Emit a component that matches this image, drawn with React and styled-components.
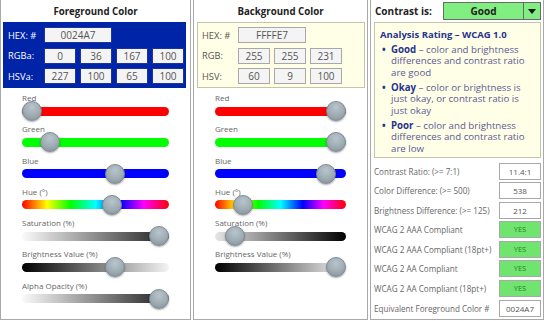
import { Fragment } from "react";
import styled, { createGlobalStyle } from "styled-components";

const GlobalStyle = createGlobalStyle`
  body {
    margin: 0;
    background: #fff;
    font-family: "Open Sans", "Noto Sans", sans-serif;
  }
`;

const Page = styled.div`
  display: flex;
  gap: 2px;
  width: 544px;
  height: 320px;
  overflow: hidden;
`;

const Panel = styled.div`
  flex: none;
  width: ${(p) => p.$w}px;
  box-sizing: border-box;
  border: 1px solid #a9a9a9;
  border-top: none;
  display: flex;
  flex-direction: column;
  overflow: hidden;
`;

const Title = styled.div`
  height: 22px;
  line-height: 23px;
  text-align: center;
  font-size: 9.7px;
  font-weight: 700;
  color: #222;
`;

const ColorBox = styled.div`
  margin: 0 ${(p) => p.$mr}px 0 ${(p) => p.$ml}px;
  box-sizing: border-box;
  height: 66px;
  padding: 4px 4px 0;
  background: ${(p) => p.$bg};
  border: 1px solid ${(p) => p.$border};
  display: grid;
  grid-template-columns: 32px repeat(4, 32px);
  grid-auto-rows: 16px;
  column-gap: 4px;
  row-gap: 4.5px;
  align-items: center;
`;

const BoxLabel = styled.span`
  font-size: 9.3px;
  color: ${(p) => (p.$light ? "#fff" : "#555")};
  white-space: nowrap;
`;

const Field = styled.input`
  box-sizing: border-box;
  width: 100%;
  height: 16px;
  padding: 0;
  border: 1px solid ${(p) => (p.$dark ? "#1d3596" : "#a8a8a8")};
  background: #f4f4f4;
  color: #555;
  font-family: inherit;
  font-size: 10px;
  text-align: center;
  grid-column: span ${(p) => p.$span || 1};
`;

const SliderList = styled.div`
  padding: 4px 21px 0;
  display: flex;
  flex-direction: column;
`;

const SliderBlock = styled.div`
  height: 31.3px;
`;

const SliderLabel = styled.div`
  height: 12px;
  line-height: 12px;
  font-size: 8px;
  color: #666;
`;

const TrackWrap = styled.div`
  height: 14px;
  display: flex;
  align-items: center;
`;

const Track = styled.div`
  position: relative;
  flex: 1;
  height: 9px;
  border-radius: 5px;
  background: ${(p) => p.$bg};
`;

const Thumb = styled.div`
  position: absolute;
  top: 50%;
  width: 20px;
  height: 20px;
  margin-top: -10px;
  box-sizing: border-box;
  border-radius: 50%;
  border: 1px solid #7d8a92;
  background: radial-gradient(circle at 50% 30%, #b9c5cc 0%, #9eabb3 55%, #7f8d95 100%);
  box-shadow: 0 1px 2px rgba(0, 0, 0, 0.35);
`;

const Header = styled.div`
  height: 22px;
  display: flex;
  align-items: center;
  justify-content: space-between;
  padding: 0 2px 0 4px;
`;

const HeaderLabel = styled.span`
  font-size: 10px;
  font-weight: 700;
  color: #222;
`;

const Select = styled.div`
  width: 98px;
  height: 18px;
  box-sizing: border-box;
  border: 1px solid #6a6a6a;
  background: #80ee80;
  display: flex;
`;

const SelectValue = styled.div`
  flex: 1;
  text-align: center;
  line-height: 16px;
  font-size: 10px;
  font-weight: 700;
  color: #222;
`;

const SelectArrow = styled.div`
  width: 16px;
  border-left: 1px solid #6a6a6a;
  display: flex;
  align-items: center;
  justify-content: center;
  &::after {
    content: "";
    border-left: 4px solid transparent;
    border-right: 4px solid transparent;
    border-top: 5px solid #111;
  }
`;

const InfoBox = styled.div`
  margin: 0 2px 0 3px;
  height: 136px;
  box-sizing: border-box;
  padding: 5px 2px 0 5px;
  background: #ffffe7;
  border: 1px solid #c4c4a8;
`;

const InfoTitle = styled.div`
  font-size: 9.5px;
  font-weight: 700;
  color: #26338f;
  line-height: 13px;
  white-space: nowrap;
`;

const InfoList = styled.ul`
  list-style: none;
  margin: 2.5px 0 0;
  padding: 0 0 0 2px;
  display: flex;
  flex-direction: column;
  gap: 3.5px;
`;

const InfoItem = styled.li`
  display: flex;
  font-size: 9.7px;
  line-height: 11.5px;
  color: #5a5a96;
  white-space: nowrap;
  &::before {
    content: "•";
    width: 9px;
    flex: none;
    color: #26338f;
    font-weight: 700;
  }
`;

const Strong = styled.b`
  color: #26338f;
`;

const Stats = styled.div`
  margin-top: 4.5px;
  padding: 0 2px 0 3px;
  display: grid;
  grid-template-columns: 1fr 42px;
  grid-auto-rows: 17px;
  row-gap: 2.6px;
  align-items: center;
`;

const StatLabel = styled.span`
  font-size: 8.1px;
  color: #666;
  white-space: nowrap;
`;

const StatValue = styled.div`
  height: 17px;
  box-sizing: border-box;
  border: 1px solid #a8a8a8;
  background: ${(p) => (p.$ok ? "#6fe56f" : "#fff")};
  color: ${(p) => (p.$ok ? "#2a7d2a" : "#555")};
  font-size: ${(p) => (p.$ok ? 7.5 : 8)}px;
  line-height: 15px;
  text-align: center;
`;

const hueTrack =
  "linear-gradient(to right, #f00, #ff0 17%, #0f0 33%, #0ff 50%, #00f 67%, #f0f 83%, #f00)";

const fgSliders = [
  { label: "Red", bg: "#ff0000", v: 0 },
  { label: "Green", bg: "#00ff00", v: 36 / 255 },
  { label: "Blue", bg: "#0000ff", v: 167 / 255 },
  { label: "Hue (°)", bg: hueTrack, v: 227 / 360 },
  { label: "Saturation (%)", bg: "linear-gradient(to right, #fafafa, #1e1e1e)", v: 1 },
  { label: "Brightness Value (%)", bg: "linear-gradient(to right, #000, #f4f4f4)", v: 0.65 },
  { label: "Alpha Opacity (%)", bg: "linear-gradient(to right, #fafafa, #1e1e1e)", v: 1 },
];

const bgSliders = [
  { label: "Red", bg: "#ff0000", v: 1 },
  { label: "Green", bg: "#00ff00", v: 1 },
  { label: "Blue", bg: "#0000ff", v: 231 / 255 },
  { label: "Hue (°)", bg: hueTrack, v: 60 / 360 },
  { label: "Saturation (%)", bg: "linear-gradient(to right, #e6e6e6, #000)", v: 0.09 },
  { label: "Brightness Value (%)", bg: "linear-gradient(to right, #000, #f4f4f4)", v: 1 },
];

const stats = [
  { label: "Contrast Ratio: (>= 7:1)", value: "11.4:1" },
  { label: "Color Difference: (>= 500)", value: "538" },
  { label: "Brightness Difference: (>= 125)", value: "212" },
  { label: "WCAG 2 AAA Compliant", value: "YES", ok: true },
  { label: "WCAG 2 AAA Compliant (18pt+)", value: "YES", ok: true },
  { label: "WCAG 2 AA Compliant", value: "YES", ok: true },
  { label: "WCAG 2 AA Compliant (18pt+)", value: "YES", ok: true },
  { label: "Equivalent Foreground Color #", value: "0024A7" },
];

function Slider({ label, bg, v }) {
  return (
    <SliderBlock>
      <SliderLabel>{label}</SliderLabel>
      <TrackWrap>
        <Track $bg={bg}>
          <Thumb style={{ left: `calc(${v} * (100% - 20px))` }} />
        </Track>
      </TrackWrap>
    </SliderBlock>
  );
}

export default function App() {
  return (
    <Page>
      <GlobalStyle />
      <Panel $w={191}>
        <Title>Foreground Color</Title>
        <ColorBox $bg="#0024a7" $border="#0024a7" $ml={2} $mr={4}>
          <BoxLabel $light>HEX: #</BoxLabel>
          <Field $dark $span={2} readOnly value="0024A7" />
          <span />
          <span />
          <BoxLabel $light>RGBa:</BoxLabel>
          {["0", "36", "167", "100"].map((n, i) => (
            <Field $dark key={i} readOnly value={n} />
          ))}
          <BoxLabel $light>HSVa:</BoxLabel>
          {["227", "100", "65", "100"].map((n, i) => (
            <Field $dark key={i} readOnly value={n} />
          ))}
        </ColorBox>
        <SliderList>
          {fgSliders.map((s) => (
            <Slider key={s.label} {...s} />
          ))}
        </SliderList>
      </Panel>

      <Panel $w={175}>
        <Title>Background Color</Title>
        <ColorBox $bg="#ffffe7" $border="#c4c4a8" $ml={3} $mr={2}>
          <BoxLabel>HEX: #</BoxLabel>
          <Field $span={2} readOnly value="FFFFE7" />
          <span />
          <span />
          <BoxLabel>RGB:</BoxLabel>
          {["255", "255", "231"].map((n, i) => (
            <Field key={i} readOnly value={n} />
          ))}
          <span />
          <BoxLabel>HSV:</BoxLabel>
          {["60", "9", "100"].map((n, i) => (
            <Field key={i} readOnly value={n} />
          ))}
        </ColorBox>
        <SliderList>
          {bgSliders.map((s) => (
            <Slider key={s.label} {...s} />
          ))}
        </SliderList>
      </Panel>

      <Panel $w={174}>
        <Header>
          <HeaderLabel>Contrast is:</HeaderLabel>
          <Select>
            <SelectValue>Good</SelectValue>
            <SelectArrow />
          </Select>
        </Header>
        <InfoBox>
          <InfoTitle>Analysis Rating – WCAG 1.0</InfoTitle>
          <InfoList>
            <InfoItem>
              <span>
                <Strong>Good</Strong> – color and brightness
                <br />
                differences and contrast ratio
                <br />
                are good
              </span>
            </InfoItem>
            <InfoItem>
              <span>
                <Strong>Okay</Strong> – color or brightness is
                <br />
                just okay, or contrast ratio is
                <br />
                just okay
              </span>
            </InfoItem>
            <InfoItem>
              <span>
                <Strong>Poor</Strong> – color and brightness
                <br />
                differences and contrast ratio
                <br />
                are low
              </span>
            </InfoItem>
          </InfoList>
        </InfoBox>
        <Stats>
          {stats.map((s) => (
            <Fragment key={s.label}>
              <StatLabel>{s.label}</StatLabel>
              <StatValue $ok={s.ok}>{s.value}</StatValue>
            </Fragment>
          ))}
        </Stats>
      </Panel>
    </Page>
  );
}
